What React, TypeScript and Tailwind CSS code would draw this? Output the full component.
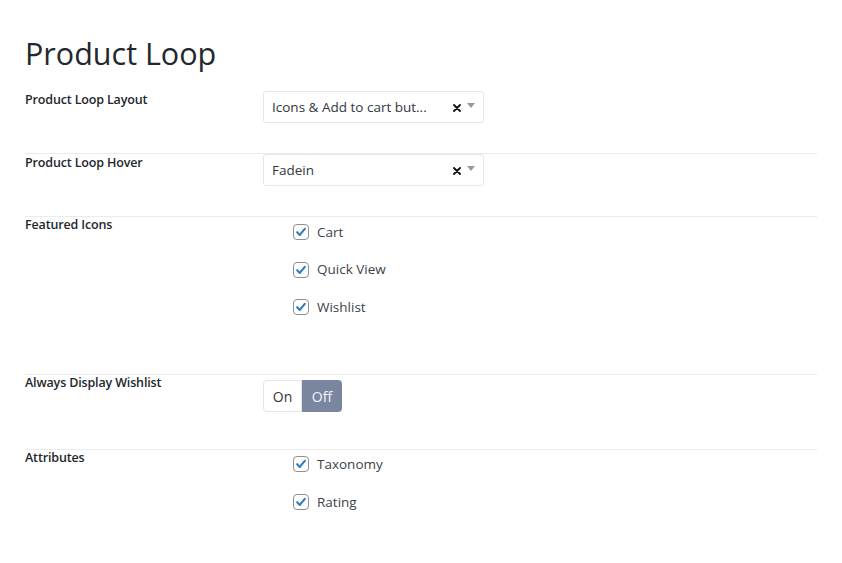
import React from "react";

const font = { fontFamily: '"Open Sans", "Noto Sans", Arial, sans-serif' };

function Check({ label }: { label: string }) {
  return (
    <div className="flex items-center h-[20px]">
      <span className="w-[16px] h-[16px] rounded-[4px] border border-[#8c8f94] bg-white flex items-center justify-center">
        <svg width="12" height="12" viewBox="0 0 12 12">
          <path d="M2.2 6.2l2.6 2.7 5-6" fill="none" stroke="#2f7fc1" strokeWidth="2.2" strokeLinecap="round" strokeLinejoin="round" />
        </svg>
      </span>
      <span className="ml-[8px] text-[13.5px] text-[#3c434a]">{label}</span>
    </div>
  );
}

function Select({ value }: { value: string }) {
  return (
    <div className="w-[221px] h-[32px] border border-[#e6e6e6] rounded-[3px] bg-white flex items-center pl-[8px] pr-[8px]">
      <span className="flex-1 text-[13.5px] text-[#32373c] truncate">{value}</span>
      <svg width="8" height="8" viewBox="0 0 8 8" className="mr-[6px] mt-[2px]">
        <path d="M1 1l6 6M7 1L1 7" stroke="#111" strokeWidth="1.8" strokeLinecap="round" />
      </svg>
      <svg width="8" height="5" viewBox="0 0 8 5" className="mb-[3px]">
        <path d="M0 0h8L4 5z" fill="#999" />
      </svg>
    </div>
  );
}

function Label({ children }: { children: React.ReactNode }) {
  return (
    <div className="w-[238px] shrink-0 text-[12.5px] tracking-[-0.15px] font-semibold text-[#23282d] leading-[20px]">{children}</div>
  );
}

export default function App() {
  return (
    <div className="w-[842px] h-[563px] bg-white" style={font}>
      <div className="pl-[25px] w-[817px]">
        <h1 className="text-[30.5px] font-normal text-[#23282d] pt-[33px] leading-[40px] h-[88px]">Product Loop</h1>

        <div className="flex h-[65px]">
          <div className="pt-[2px]"><Label>Product Loop Layout</Label></div>
          <div className="pt-[3px]"><Select value="Icons & Add to cart but..." /></div>
        </div>

        <div className="flex h-[63px] border-t border-[#ebebeb]">
          <div className="-mt-[1px]"><Label>Product Loop Hover</Label></div>
          <div className="pt-[0px]"><Select value="Fadein" /></div>
        </div>

        <div className="flex h-[158px] border-t border-[#ebebeb]">
          <div className="-mt-[2px]"><Label>Featured Icons</Label></div>
          <div className="pl-[30px] pt-[5px] flex flex-col gap-[17.5px]">
            <Check label="Cart" />
            <Check label="Quick View" />
            <Check label="Wishlist" />
          </div>
        </div>

        <div className="flex h-[75px] border-t border-[#ebebeb]">
          <div className="-mt-[2px]"><Label>Always Display Wishlist</Label></div>
          <div className="pt-[5px] flex">
            <div className="w-[39px] h-[32px] flex items-center justify-center border border-[#e2e4e7] rounded-l-[4px] text-[14px] text-[#32373c]">On</div>
            <div className="w-[40px] h-[32px] flex items-center justify-center bg-[#7a86a0] rounded-r-[4px] text-[14px] text-[#f3f4f6]">Off</div>
          </div>
        </div>

        <div className="flex border-t border-[#ebebeb]">
          <div className="-mt-[2px]"><Label>Attributes</Label></div>
          <div className="pl-[30px] pt-[4px] flex flex-col gap-[18px]">
            <Check label="Taxonomy" />
            <Check label="Rating" />
          </div>
        </div>
      </div>
    </div>
  );
}
